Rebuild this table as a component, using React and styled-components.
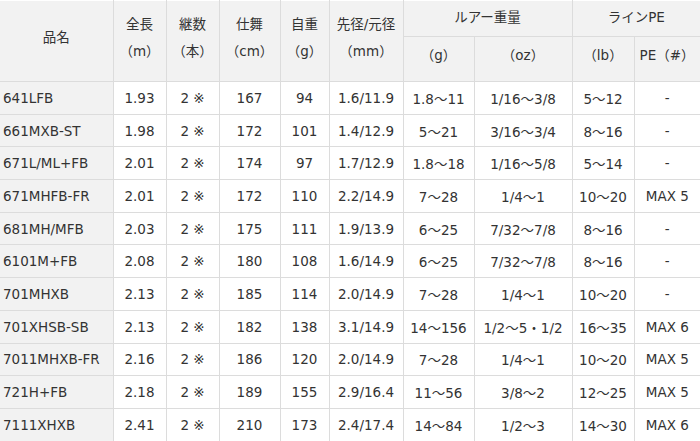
import React from 'react'
import styled, { createGlobalStyle } from 'styled-components'

const GlobalStyle = createGlobalStyle`
  html, body {
    margin: 0;
    padding: 0;
    background: #fff;
  }
`;

const rows = [
  ['641LFB', '1.93', '2 ※', '167', '94', '1.6/11.9', '1.8～11', '1/16～3/8', '5～12', '-'],
  ['661MXB-ST', '1.98', '2 ※', '172', '101', '1.4/12.9', '5～21', '3/16～3/4', '8～16', '-'],
  ['671L/ML+FB', '2.01', '2 ※', '174', '97', '1.7/12.9', '1.8～18', '1/16～5/8', '5～14', '-'],
  ['671MHFB-FR', '2.01', '2 ※', '172', '110', '2.2/14.9', '7～28', '1/4～1', '10～20', 'MAX 5'],
  ['681MH/MFB', '2.03', '2 ※', '175', '111', '1.9/13.9', '6～25', '7/32～7/8', '8～16', '-'],
  ['6101M+FB', '2.08', '2 ※', '180', '108', '1.6/14.9', '6～25', '7/32～7/8', '8～16', '-'],
  ['701MHXB', '2.13', '2 ※', '185', '114', '2.0/14.9', '7～28', '1/4～1', '10～20', '-'],
  ['701XHSB-SB', '2.13', '2 ※', '182', '138', '3.1/14.9', '14～156', '1/2～5・1/2', '16～35', 'MAX 6'],
  ['7011MHXB-FR', '2.16', '2 ※', '186', '120', '2.0/14.9', '7～28', '1/4～1', '10～20', 'MAX 5'],
  ['721H+FB', '2.18', '2 ※', '189', '155', '2.9/16.4', '11～56', '3/8～2', '12～25', 'MAX 5'],
  ['7111XHXB', '2.41', '2 ※', '210', '173', '2.4/17.4', '14～84', '1/2～3', '14～30', 'MAX 6'],
];

const widths = [113, 53, 53, 61, 49, 74, 71, 98, 62, 66];

const SpecTable = () => (
  <>
    <GlobalStyle />
    <Table>
      <colgroup>
        {widths.map((w, i) => (
          <col key={i} style={{ width: w }} />
        ))}
      </colgroup>
      <thead>
        <HeadRow $h={36}>
          <Th rowSpan={2}>品名</Th>
          <Th rowSpan={2}>全長<br />（m）</Th>
          <Th rowSpan={2}>継数<br />（本）</Th>
          <Th rowSpan={2}>仕舞<br />（cm）</Th>
          <Th rowSpan={2}>自重<br />（g）</Th>
          <Th rowSpan={2}>先径/元径<br />（mm）</Th>
          <Th colSpan={2} $top>ルアー重量</Th>
          <Th colSpan={2} $top>ラインPE</Th>
        </HeadRow>
        <HeadRow $h={45}>
          <Th>（g）</Th>
          <Th>（oz）</Th>
          <Th>（lb）</Th>
          <Th $left>PE（#）</Th>
        </HeadRow>
      </thead>
      <tbody>
        {rows.map((r) => (
          <Row key={r[0]}>
            <Name>{r[0]}</Name>
            {r.slice(1).map((v, i) => (
              <Td key={i}>{v}</Td>
            ))}
          </Row>
        ))}
      </tbody>
    </Table>
  </>
);

export default SpecTable;

const Table = styled.table`
  width: 700px;
  height: 441px;
  border-collapse: collapse;
  table-layout: fixed;
  font-family: "DejaVu Sans", "Noto Sans CJK JP", sans-serif;
  font-size: 13.5px;
  color: #333;
  border-top: 1px solid #fff;
`;

const HeadRow = styled.tr`
  height: ${(props) => props.$h}px;
`;

const Th = styled.th`
  background: #f2f2f2;
  font-weight: normal;
  line-height: 27px;
  padding: 0 0 ${(props) => (props.$top ? 2 : 7)}px;
  text-align: ${(props) => (props.$left ? 'left' : 'center')};
  padding-left: ${(props) => (props.$left ? '5px' : '0')};
  border: 1px solid #dcdcdc;
  border-top: none;
  white-space: nowrap;
  &:first-child {
    border-left: none;
  }
  &:last-child {
    border-right: none;
  }
`;

const Row = styled.tr`
  height: 32.7px;
`;

const Td = styled.td`
  background: #fff;
  text-align: center;
  padding: 0;
  border: 1px solid #dcdcdc;
  white-space: nowrap;
  &:last-child {
    border-right: none;
  }
`;

const Name = styled(Td)`
  background: #f2f2f2;
  text-align: left;
  padding-left: 3px;
  border-left: none;
`;
